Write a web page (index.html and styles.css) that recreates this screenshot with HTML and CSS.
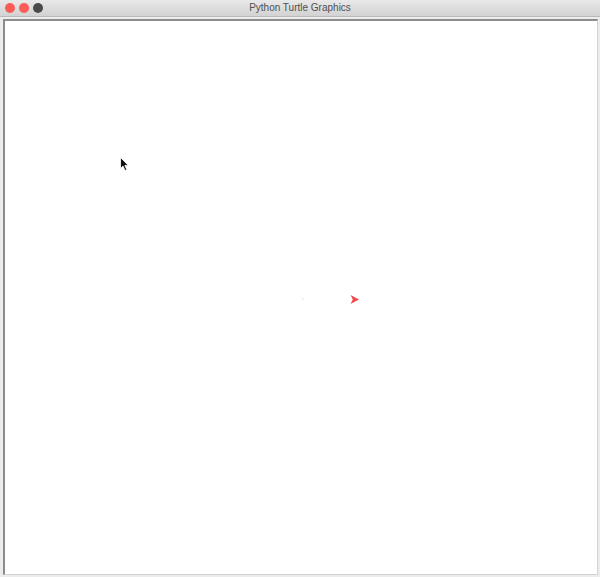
FILE: index.html
```html
<!DOCTYPE html>
<html>
<head>
<meta charset="utf-8">
<title>Python Turtle Graphics</title>
<link rel="stylesheet" href="styles.css">
</head>
<body>
<div class="window">
  <div class="titlebar">
    <div class="lights">
      <span class="light red"></span>
      <span class="light red"></span>
      <span class="light dark"></span>
    </div>
    <div class="title">Python Turtle Graphics</div>
  </div>
  <div class="frame">
    <div class="canvas">
      <svg class="drawing" width="600" height="577" viewBox="0 0 600 577">
        <rect x="302.5" y="298.5" width="1" height="1" fill="#c8c8c8"/>
        <polygon points="359,299.5 350.5,295 352.8,299.5 350.5,304" fill="#f24a4a"/>
        <path d="M120.5 157.5 L120.5 168.5 L123 166 L125 170.5 L126.8 169.7 L124.9 165.4 L128.3 165.4 Z" fill="#111" stroke="#fff" stroke-width="0.8"/>
      </svg>
    </div>
  </div>
</div>
</body>
</html>
```

FILE: styles.css
```css
html, body {
  margin: 0;
  padding: 0;
}
body {
  width: 600px;
  height: 577px;
  overflow: hidden;
  background: #ececec;
  font-family: "Liberation Sans", Arial, sans-serif;
}
.window {
  display: flex;
  flex-direction: column;
  width: 600px;
  height: 577px;
  position: relative;
}
.titlebar {
  position: relative;
  height: 16px;
  flex: none;
  background: linear-gradient(#e9e9e9, #d2d2d2);
  border-bottom: 1px solid #b9b9b9;
  display: flex;
  align-items: center;
  justify-content: center;
}
.lights {
  position: absolute;
  left: 5px;
  top: 3px;
  display: flex;
  gap: 4px;
}
.light {
  width: 10px;
  height: 10px;
  border-radius: 50%;
}
.light.red {
  background: #fc5c58;
}
.light.dark {
  background: #4a4a4a;
}
.title {
  font-size: 10px;
  color: #505050;
  line-height: 16px;
}
.frame {
  flex: 1;
  padding: 2px 2px 2px 3px;
  background: #ececec;
  display: flex;
}
.canvas {
  flex: 1;
  background: #fff;
  border-top: 2px solid #8c8c8c;
  border-left: 2px solid #8c8c8c;
  border-right: 1px solid #d4d4d4;
  border-bottom: 1px solid #d4d4d4;
  position: relative;
}
.drawing {
  position: absolute;
  left: -5px;
  top: -21px;
}
```
